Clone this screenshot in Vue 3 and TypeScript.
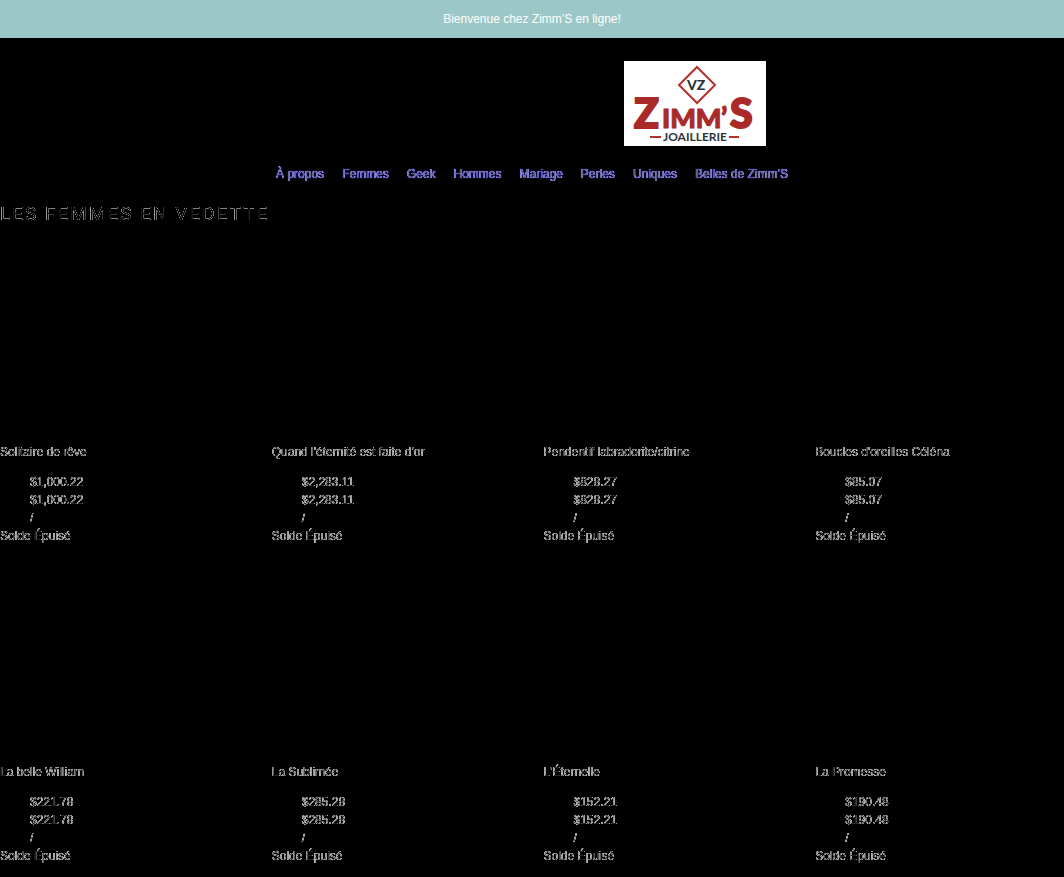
<script setup lang="ts">
interface Product {
  name: string
  price: string
}

const links: string[] = ['À propos', 'Femmes', 'Geek', 'Hommes', 'Mariage', 'Perles', 'Uniques', "Belles de Zimm'S"]

const products: Product[] = [
  { name: 'Solitaire de rêve', price: '$1,000.22' },
  { name: "Quand l'éternité est faite d'or", price: '$2,283.11' },
  { name: 'Pendentif labradorite/citrine', price: '$828.27' },
  { name: "Boucles d'oreilles Céléna", price: '$85.07' },
  { name: 'La belle William', price: '$221.78' },
  { name: 'La Sublimée', price: '$285.28' },
  { name: "L'Éternelle", price: '$152.21' },
  { name: 'La Promesse', price: '$190.48' },
]
</script>

<template>
  <div class="page">
    <!-- Keeps the glyph edges and drops their solid cores -->
    <svg class="defs" width="0" height="0" aria-hidden="true">
      <filter id="edges" x="0" y="0" width="100%" height="100%" color-interpolation-filters="sRGB">
        <feComponentTransfer>
          <feFuncA type="table" tableValues="0 0.55 0.7 0.6 0.15" />
        </feComponentTransfer>
      </filter>
      <filter id="link-edges" x="0" y="0" width="100%" height="100%" color-interpolation-filters="sRGB">
        <feComponentTransfer>
          <feFuncA type="table" tableValues="0 0.7 0.9 0.85 0.5" />
        </feComponentTransfer>
      </filter>
      <filter id="outline" x="0" y="0" width="100%" height="100%" color-interpolation-filters="sRGB">
        <feComponentTransfer>
          <feFuncA type="table" tableValues="0 0.1 0.6 0.25 0" />
        </feComponentTransfer>
      </filter>
    </svg>

    <div class="announcement">Bienvenue chez Zimm'S en ligne!</div>

    <header class="header">
      <a class="logo" href="#" aria-label="Zimm'S Joaillerie">
        <svg viewBox="0 0 142 85" width="142" height="85">
          <rect width="142" height="85" fill="#fff" />
          <path d="M73 6 91 24 73 42 55 24Z" fill="none" stroke="#b3302c" stroke-width="2" />
          <g font-family="Lato, sans-serif" font-weight="900" fill="#a92a28" stroke="#a92a28" stroke-width="1">
            <text x="63" y="29" font-size="14" fill="#2b3437" stroke="none">VZ</text>
            <text x="10" y="67" font-size="41" stroke-width="2">Z</text>
            <text x="38" y="67" font-size="27">IMM</text>
            <text x="97" y="67" font-size="28">’</text>
            <text x="106" y="67" font-size="41" stroke-width="2">S</text>
          </g>
          <text x="39" y="80" font-family="Lato, sans-serif" font-weight="700" font-size="12" fill="#2b3437">JOAILLERIE</text>
          <path d="M26 76h11M105 76h10" stroke="#b3302c" stroke-width="2" />
        </svg>
      </a>
      <nav class="nav" aria-label="Menu principal">
        <a v-for="link in links" :key="link" href="#">{{ link }}</a>
      </nav>
    </header>

    <main>
      <h2 class="heading">LES FEMMES EN VEDETTE</h2>
      <ul class="grid">
        <li v-for="product in products" :key="product.name" class="card">
          <h3>{{ product.name }}</h3>
          <div class="prices">
            <span>{{ product.price }}</span>
            <span>{{ product.price }}</span>
            <span>/</span>
          </div>
          <p>Solde Épuisé</p>
        </li>
      </ul>
    </main>
  </div>
</template>

<style>
body {
  margin: 0;
  background: #000;
}
</style>

<style scoped>
.page {
  min-height: 100vh;
  background: #000;
  color: #fff;
  font-family: 'Liberation Sans', Arial, sans-serif;
  font-size: 12px;
  line-height: 18px;
  overflow: hidden;
}

.defs {
  position: absolute;
}

.announcement {
  padding: 10px 20px;
  background: #9bc8c6;
  text-align: center;
}

.header {
  padding-top: 23px;
}

.logo {
  display: block;
  width: 142px;
  margin-left: calc(50% + 92px);
}

.logo svg {
  display: block;
}

.nav {
  display: flex;
  justify-content: center;
  gap: 18px;
  padding: 19px 0;
  filter: url(#link-edges);
}

.nav a {
  color: #c4c2ff;
  text-decoration: none;
  text-shadow: 0 0 1px #3a30e0;
}

.heading {
  margin: 0;
  font-family: Roboto, 'Liberation Sans', sans-serif;
  font-size: 19px;
  line-height: 24px;
  font-weight: 400;
  letter-spacing: 2px;
  filter: url(#outline);
}

.grid {
  display: grid;
  grid-template-columns: repeat(4, minmax(0, 1fr));
  column-gap: 23px;
  margin: 0;
  padding: 0;
  list-style: none;
  filter: url(#edges);
}

.card {
  padding: 217px 0 1px;
}

.card h3 {
  margin: 0 0 12px;
  font-size: 12px;
  line-height: 18px;
  font-weight: 400;
}

.card p {
  margin: 0;
}

.prices {
  display: flex;
  flex-direction: column;
  padding-left: 30px;
}
</style>
